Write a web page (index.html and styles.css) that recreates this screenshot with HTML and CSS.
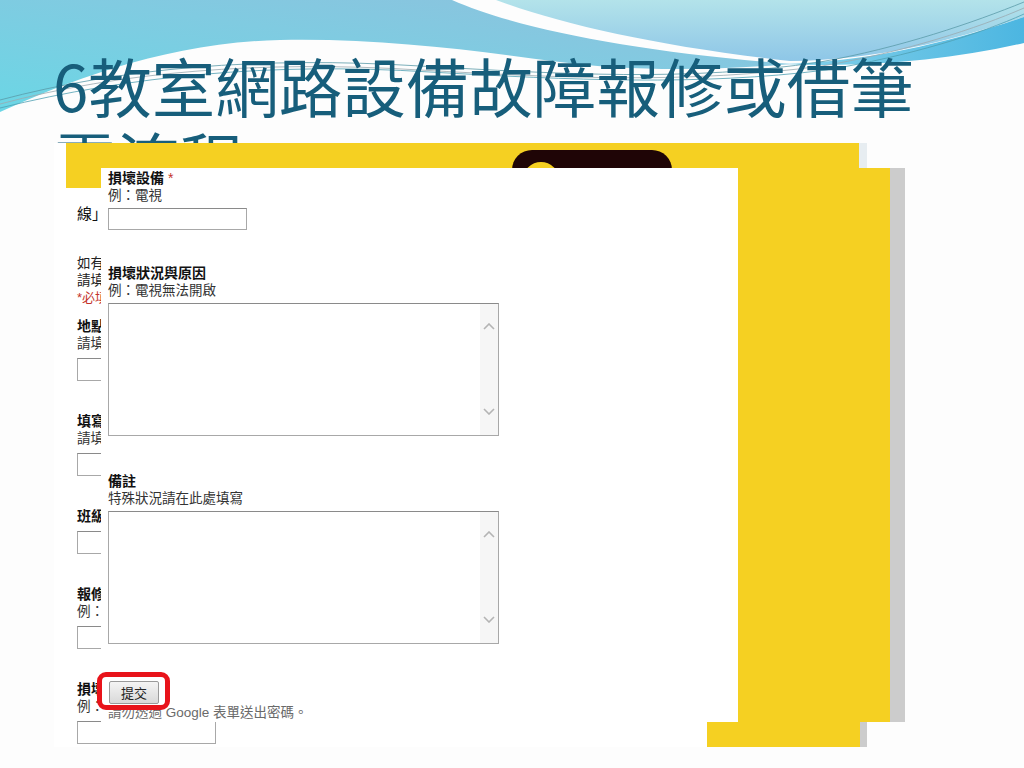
FILE: index.html
```html
<!DOCTYPE html>
<html lang="zh-Hant">
  <head>
    <meta charset="UTF-8" />
    <meta name="viewport" content="width=device-width, initial-scale=1.0" />
    <title>教室網路設備故障報修</title>
    <link rel="stylesheet" href="styles.css">
  </head>
  <body>
    <div class="slide">
      <!-- theme waves at the top of the slide -->
      <svg class="deco" width="1024" height="140" viewBox="0 0 1024 140">
        <defs>
          <linearGradient id="gLeft" x1="0" y1="1" x2="1" y2="0">
            <stop offset="0" stop-color="#6bd6e5" />
            <stop offset="0.55" stop-color="#80cbe1" />
            <stop offset="1" stop-color="#8fc0dd" />
          </linearGradient>
          <linearGradient id="gLobe" x1="0" y1="0" x2="0" y2="1">
            <stop offset="0" stop-color="#b3e3ea" />
            <stop offset="1" stop-color="#8ec6e7" />
          </linearGradient>
          <linearGradient id="gStripe" x1="0" y1="0" x2="1" y2="0">
            <stop offset="0" stop-color="#86d2ea" />
            <stop offset="1" stop-color="#4cb6e1" />
          </linearGradient>
        </defs>
        <path fill="url(#gLeft)" d="M0,0 H452 C520,30 640,52 790,64 C700,72 620,70 560,62 C470,50 380,38 280,40 C170,42 70,80 0,112 Z" />
        <path fill="url(#gLobe)" d="M496,0 C560,24 660,47 790,61 C880,60 960,38 1024,17 V0 Z" />
        <path fill="url(#gStripe)" d="M780,64 C870,62 950,42 1024,17 V43 C950,60 870,68 780,64 Z" />
        <g fill="none" stroke-width="0.8">
          <path stroke="#5a9aa8" d="M0,100 C120,68 260,56 420,66 C560,74 690,82 820,62 C900,48 975,22 1024,2" />
          <path stroke="#9aaab0" d="M0,104 C120,72 260,60 420,70 C560,78 690,84 822,66 C905,52 978,28 1024,8" />
          <path stroke="#4f9fb3" d="M0,108 C130,76 270,62 430,72 C570,80 700,86 826,70 C910,56 980,34 1024,14" />
        </g>
      </svg>

      <h1 class="title">6教室網路設備故障報修或借筆<br>電流程</h1>

      <!-- screenshot behind: first page of the form -->
      <div class="shot shot-back">
        <div class="back-head">
          <div class="head-band">
            <div class="logo"><span class="logo-dot"></span></div>
          </div>
          <div class="head-corner"></div>
        </div>
        <div class="back-body">
          <div class="panel back-panel">
            <p class="intro">線」</p>
            <div class="notes">
              <p>如有</p>
              <p>請填</p>
              <p class="req">*必填</p>
            </div>
            <div class="q">
              <p class="q-label">地點</p>
              <p class="q-help">請填</p>
              <div class="field"></div>
            </div>
            <div class="q">
              <p class="q-label">填寫</p>
              <p class="q-help">請填</p>
              <div class="field"></div>
            </div>
            <div class="q">
              <p class="q-label">班級</p>
              <div class="field"></div>
            </div>
            <div class="q">
              <p class="q-label">報修</p>
              <p class="q-help">例：</p>
              <div class="field"></div>
            </div>
            <div class="q">
              <p class="q-label">損壞</p>
              <p class="q-help">例：</p>
              <div class="field"></div>
            </div>
          </div>
          <div class="side"></div>
          <div class="scroll scroll-thin"></div>
        </div>
      </div>

      <!-- screenshot in front: second part of the form -->
      <div class="shot shot-front">
        <div class="panel front-panel">
          <p class="q-label">損壞設備 <span class="star">*</span></p>
          <p class="q-help">例：電視</p>
          <div class="field field-front"></div>

          <p class="q-label gap">損壞狀況與原因</p>
          <p class="q-help">例：電視無法開啟</p>
          <div class="area">
            <div class="area-fill"></div>
            <div class="area-bar">
              <svg width="12" height="7" viewBox="0 0 12 7"><polyline points="1,6 6,1 11,6" /></svg>
              <svg width="12" height="7" viewBox="0 0 12 7"><polyline points="1,1 6,6 11,1" /></svg>
            </div>
          </div>

          <p class="q-label gap-lg">備註</p>
          <p class="q-help">特殊狀況請在此處填寫</p>
          <div class="area">
            <div class="area-fill"></div>
            <div class="area-bar">
              <svg width="12" height="7" viewBox="0 0 12 7"><polyline points="1,6 6,1 11,6" /></svg>
              <svg width="12" height="7" viewBox="0 0 12 7"><polyline points="1,1 6,6 11,1" /></svg>
            </div>
          </div>

          <button class="submit" type="button">提交</button>
          <p class="pw-note">請勿透過 Google 表單送出密碼。</p>
        </div>
        <div class="side"></div>
        <div class="scroll"></div>
        <div class="mark"></div>
      </div>
    </div>
  </body>
</html>
```

FILE: styles.css
```css
body {
  margin: 0;
  background: #fdfdfd;
}
p {
  margin: 0;
}
.slide {
  position: relative;
  width: 1024px;
  height: 768px;
  overflow: hidden;
  background: #fdfdfd;
}
.deco {
  position: absolute;
  left: 0;
  top: 0;
}
.title {
  position: relative;
  margin: 0;
  padding: 47px 0 0 53px;
  font-family: "Noto Sans CJK TC", "Noto Sans", sans-serif;
  font-size: 63.5px;
  font-weight: normal;
  line-height: 74px;
  letter-spacing: 0;
  color: #175e7b;
  white-space: nowrap;
}

/* screenshots */
.shot {
  position: absolute;
  display: flex;
  font-family: "Liberation Sans", "Noto Sans CJK TC", sans-serif;
  color: #222;
  white-space: nowrap;
}
.shot-back {
  left: 54px;
  top: 143px;
  width: 813px;
  height: 604px;
  flex-direction: column;
  padding-left: 12px;
  box-sizing: border-box;
  background: #fff;
}
.shot-front {
  left: 101px;
  top: 168px;
  width: 804px;
  height: 554px;
}
.back-head {
  display: flex;
  height: 45px;
}
.head-band {
  width: 793px;
  background: #f5d022;
  overflow: hidden;
}
.head-corner {
  flex: 1;
  background: #e7edf1;
}
.logo {
  width: 160px;
  height: 44px;
  margin: 7px 0 0 446px;
  padding: 12px 0 0 11px;
  box-sizing: border-box;
  border-radius: 20px;
  background: #1f0506;
}
.logo-dot {
  display: block;
  width: 36px;
  height: 36px;
  border-radius: 50%;
  background: #f5d022;
}
.back-body {
  display: flex;
  flex: 1;
}
.panel {
  background: #fff;
  overflow: hidden;
}
.back-panel {
  width: 630px;
  padding: 16px 0 0 11px;
}
.front-panel {
  width: 630px;
  padding: 2px 0 0 7px;
}
.side {
  width: 152px;
  background: #f5d022;
}
.back-panel + .side {
  width: 153px;
}
.scroll {
  flex: 1;
  background: #cccccc;
}

/* form text */
.intro {
  font-size: 15px;
  line-height: 20px;
  color: #111;
}
.notes {
  margin-top: 31px;
  font-size: 13.5px;
  line-height: 17px;
}
.req {
  font-size: 13px;
  color: #c4332a;
}
.q {
  margin-top: 12px;
}
.q + .q {
  margin-top: 32px;
}
.q-label {
  font-size: 14px;
  font-weight: bold;
  line-height: 17px;
  color: #111;
}
.q-help {
  font-size: 13.5px;
  line-height: 17px;
  color: #333;
}
.star {
  color: #c4332a;
  font-weight: normal;
}
.field {
  width: 139px;
  height: 23px;
  margin-top: 6px;
  box-sizing: border-box;
  border: 1px solid #a8a8a8;
  border-top-color: #8a8a8a;
  background: #fff;
}
.field-front {
  height: 22px;
  margin-top: 4px;
}
.gap {
  margin-top: 35px;
}
.gap-lg {
  margin-top: 37px;
}
.area {
  display: flex;
  width: 391px;
  height: 133px;
  margin-top: 4px;
  box-sizing: border-box;
  border: 1px solid #a8a8a8;
  border-top-color: #8a8a8a;
}
.area-fill {
  flex: 1;
}
.area-bar {
  display: flex;
  flex-direction: column;
  justify-content: space-between;
  align-items: center;
  width: 18px;
  padding: 19px 0 20px;
  background: #f6f6f6;
}
.area-bar polyline {
  fill: none;
  stroke: #b4b4b4;
  stroke-width: 1.6;
}
.submit {
  display: block;
  width: 50px;
  height: 23px;
  margin: 37px 0 0 1px;
  padding: 0;
  border: 1px solid #9a9a9a;
  border-radius: 2px;
  background: linear-gradient(#f4f4f4, #d9d9d9);
  font-family: "Liberation Sans", "Noto Sans CJK TC", sans-serif;
  font-size: 13px;
  color: #222;
}
.pw-note {
  font-size: 13.5px;
  line-height: 17px;
  color: #6a6a6a;
}

/* red highlight drawn over the submit button */
.mark {
  position: absolute;
  left: -4px;
  top: 504px;
  width: 73px;
  height: 38px;
  box-sizing: border-box;
  border: 5px solid #e8131a;
  border-radius: 9px;
}
```
